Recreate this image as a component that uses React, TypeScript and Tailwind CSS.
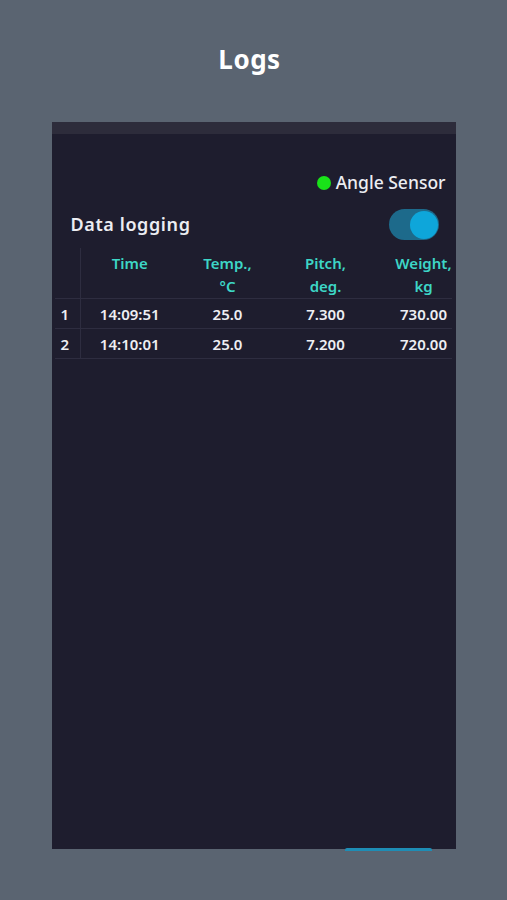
import React from "react";

interface LogRow {
  id: number;
  time: string;
  temp: string;
  pitch: string;
  weight: string;
}

const rows: LogRow[] = [
  { id: 1, time: "14:09:51", temp: "25.0", pitch: "7.300", weight: "730.00" },
  { id: 2, time: "14:10:01", temp: "25.0", pitch: "7.200", weight: "720.00" },
];

const font = { fontFamily: '"Noto Sans", "DejaVu Sans", sans-serif' };

export default function App() {
  return (
    <div
      className="w-[507px] h-[900px] bg-[#5a6471] flex flex-col items-center"
      style={font}
    >
      <div className="h-[122px] w-full flex items-center justify-center pb-[4px]">
        <h1 className="text-[26px] font-bold text-white tracking-[0.5px] pr-[8px]">Logs</h1>
      </div>

      <div className="relative w-[404px] h-[727px] bg-[#1e1d2e] flex flex-col">
        <div className="h-[12px] bg-[#2d2c3b]"></div>

        <div className="mt-[37px] h-[24px] flex items-center justify-end pr-[10px] gap-[5px]">
          <span className="w-[14px] h-[14px] rounded-full bg-[#19e219]"></span>
          <span className="text-[17.5px] font-medium text-[#ecedf2] leading-none">
            Angle Sensor
          </span>
        </div>

        <div className="mt-[14px] h-[31px] flex items-center justify-between pl-[19px] pr-[17px]">
          <span className="text-[18px] font-semibold text-[#ecedf2] tracking-[0.6px]">
            Data logging
          </span>
          <div className="w-[50px] h-[31px] rounded-full bg-[#1d6a8b] flex items-center justify-end pr-[1px]">
            <span className="w-[28px] h-[28px] rounded-full bg-[#0ea6da]"></span>
          </div>
        </div>

        <div className="mt-[8px] mx-[3px] w-[397px] overflow-hidden">
          <table className="table-fixed border-collapse w-[418px] text-[15px] font-semibold">
            <colgroup>
              <col className="w-[26px]" />
              <col className="w-[98px]" />
              <col className="w-[98px]" />
              <col className="w-[98px]" />
              <col className="w-[98px]" />
            </colgroup>
            <thead>
              <tr className="h-[50px] border-b border-[#2e2d40] text-[#3dd6c6] leading-[23px]">
                <th className="border-r border-[#2e2d40]"></th>
                <th className="align-top pt-[4px] font-semibold">Time</th>
                <th className="align-top pt-[4px] font-semibold">
                  Temp.,
                  <br />
                  °C
                </th>
                <th className="align-top pt-[4px] font-semibold">
                  Pitch,
                  <br />
                  deg.
                </th>
                <th className="align-top pt-[4px] font-semibold">
                  Weight,
                  <br />
                  kg
                </th>
              </tr>
            </thead>
            <tbody className="text-[#eeeff3]">
              {rows.map((row) => (
                <tr key={row.id} className="h-[30px] border-b border-[#2e2d40]">
                  <td className="border-r border-[#2e2d40] pl-[6px] pt-[2px]">{row.id}</td>
                  <td className="text-center pt-[2px]">{row.time}</td>
                  <td className="text-center pt-[2px]">{row.temp}</td>
                  <td className="text-center pt-[2px]">{row.pitch}</td>
                  <td className="text-center pt-[2px]">{row.weight}</td>
                </tr>
              ))}
            </tbody>
          </table>
        </div>

        {/* edge of a button peeking below the panel */}
        <div className="absolute bottom-[-2px] left-[293px] w-[87px] h-[3px] rounded-t-[2px] bg-[#1e8db5]"></div>
      </div>
    </div>
  );
}
